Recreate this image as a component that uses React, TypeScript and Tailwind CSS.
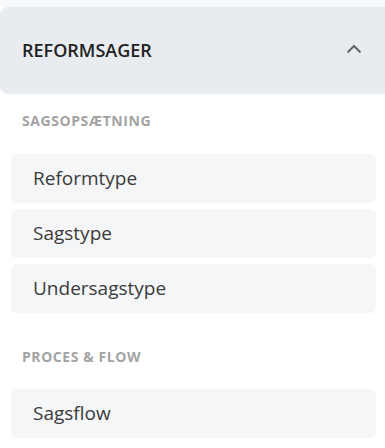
import React from "react";

const font = { fontFamily: '"Open Sans", "Noto Sans", sans-serif' };

function Item({ label }: { label: string }) {
  return (
    <div className="h-[49px] rounded-[6px] bg-[#f5f6f8] flex items-center pl-[22px] text-[19px] text-[#3b3b3b]">
      {label}
    </div>
  );
}

function Label({ text }: { text: string }) {
  return (
    <div className="pl-[22px] text-[14px] font-bold tracking-[0.04em] text-[#a3a3a3] leading-none">
      {text}
    </div>
  );
}

export default function App() {
  return (
    <div className="w-[385px] h-[448px] bg-white overflow-hidden" style={font}>
      <div className="h-[7px] bg-[#f7f8fa]" />
      <div className="h-[87px] bg-[#e8ecf0] rounded-l-[8px] flex items-center justify-between pl-[22px] pr-[23px]">
        <span className="text-[18px] font-semibold text-[#222]">REFORMSAGER</span>
        <svg width="16" height="10" viewBox="0 0 16 10" fill="none" className="mb-[4px]">
          <polyline points="1.5,8.5 8,2 14.5,8.5" stroke="#666" strokeWidth="2" fill="none" />
        </svg>
      </div>
      <div className="pt-[20px]">
        <Label text="SAGSOPSÆTNING" />
        <div className="mt-[26px] pl-[11px] pr-[9px] flex flex-col gap-[6px]">
          <Item label="Reformtype" />
          <Item label="Sagstype" />
          <Item label="Undersagstype" />
        </div>
        <div className="mt-[37px]">
          <Label text="PROCES & FLOW" />
        </div>
        <div className="mt-[25px] pl-[11px] pr-[9px]">
          <Item label="Sagsflow" />
        </div>
      </div>
    </div>
  );
}
